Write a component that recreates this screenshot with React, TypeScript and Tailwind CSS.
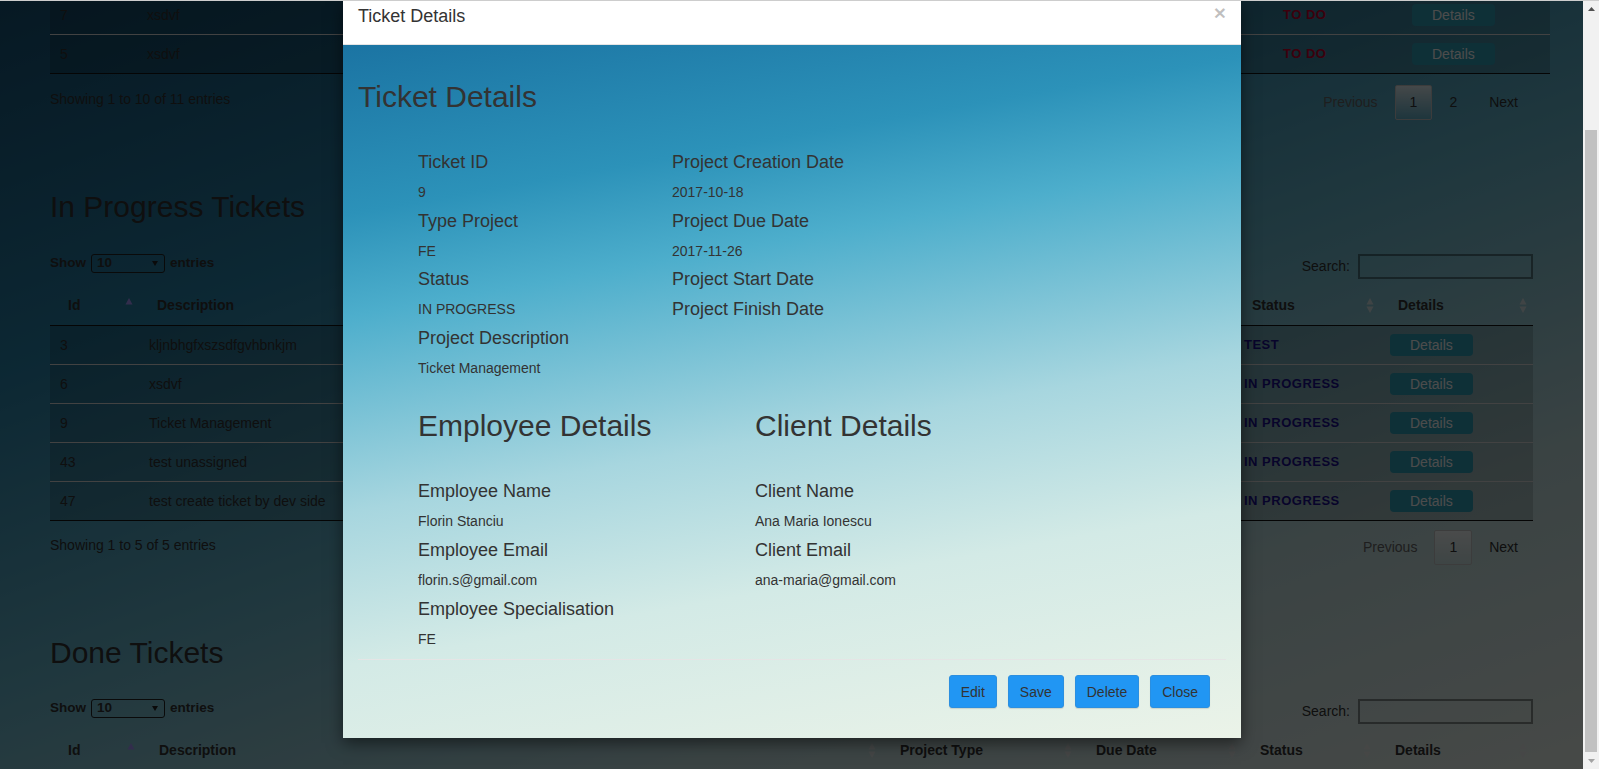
import React from 'react';

type Status = 'TO DO' | 'TEST' | 'IN PROGRESS';

interface Ticket {
  id: number;
  description: string;
  status: Status;
}

const topRows: Ticket[] = [
  { id: 7, description: 'xsdvf', status: 'TO DO' },
  { id: 5, description: 'xsdvf', status: 'TO DO' },
];

const progressRows: Ticket[] = [
  { id: 3, description: 'kljnbhgfxszsdfgvhbnkjm', status: 'TEST' },
  { id: 6, description: 'xsdvf', status: 'IN PROGRESS' },
  { id: 9, description: 'Ticket Management', status: 'IN PROGRESS' },
  { id: 43, description: 'test unassigned', status: 'IN PROGRESS' },
  { id: 47, description: 'test create ticket by dev side', status: 'IN PROGRESS' },
];

const headers = ['Id', 'Description', 'Project Type', 'Due Date', 'Status', 'Details'];

const SortIcon = ({ dir }: { dir: 'asc' | 'both' }) => (
  <svg width="8" height="15" viewBox="0 0 8 15" className="shrink-0">
    <path d="M4 0L7.5 6.5H0.5Z" fill={dir === 'asc' ? '#a898ff' : '#ececec'} fillOpacity={dir === 'asc' ? 1 : 0.75} />
    {dir === 'both' && <path d="M0.5 8.5H7.5L4 15Z" fill="#ececec" fillOpacity={0.75} />}
  </svg>
);

const HeaderRow = ({ grid }: { grid: string }) => (
  <div className={`grid ${grid} h-[41px] border-b border-[#111]`}>
    {headers.map((h, i) => (
      <div key={h} className="flex items-center justify-between pl-[18px] pr-[6px] text-[14px] font-bold text-[#333]">
        <span>{h}</span>
        <SortIcon dir={i === 0 ? 'asc' : 'both'} />
      </div>
    ))}
  </div>
);

// the middle columns sit under the modal, so they stay empty here
const TicketRow = ({ t, grid, first }: { t: Ticket; grid: string; first: boolean }) => (
  <div className={`grid ${grid} bg-black/15 ${first ? 'h-[38px]' : 'h-[39px] border-t border-[#dddddd]'}`}>
    <div className="flex items-center px-[10px] text-[14px] text-[#333]">{t.id}</div>
    <div className="flex items-center px-[10px] text-[14px] text-[#333] whitespace-nowrap">{t.description}</div>
    <div />
    <div />
    <div
      className={`flex items-center px-[10px] text-[13px] font-bold tracking-[0.5px] whitespace-nowrap ${
        t.status === 'TO DO' ? 'text-[#c8002c]' : 'text-[#1c1090]'
      }`}
    >
      {t.status}
    </div>
    <div className="flex items-center px-[10px]">
      <button className="h-[22px] px-[20px] rounded-[4px] bg-[#2fa0ba] text-[14px] leading-[20px] text-white">Details</button>
    </div>
  </div>
);

const Pager = ({ pages }: { pages: number }) => (
  <div className="flex items-center h-[35px] text-[14px]">
    <span className="px-[15px] text-[#666]">Previous</span>
    <span className="ml-[2px] h-[35px] px-[14px] flex items-center border border-[#c8c8c8] rounded-[2px] bg-[linear-gradient(to_bottom,rgba(255,255,255,0.85),rgba(255,255,255,0.05))] text-[#333]">
      1
    </span>
    {pages > 1 && <span className="ml-[2px] px-[15px] text-[#333]">2</span>}
    <span className="ml-[2px] px-[15px] text-[#333]">Next</span>
  </div>
);

const TableFooter = ({ info, pages, infoMt, pagerMt }: { info: string; pages: number; infoMt: string; pagerMt: string }) => (
  <div className="flex justify-between items-start">
    <div className={`${infoMt} text-[14px] leading-[20px] text-[#333]`}>{info}</div>
    <div className={pagerMt}>
      <Pager pages={pages} />
    </div>
  </div>
);

const Controls = () => (
  <div className="flex justify-between items-start h-[25px]">
    <div className="flex items-center h-[19px] text-[13.5px] font-bold text-[#333]">
      <span>Show</span>
      <div className="mx-[5px] w-[74px] h-[19px] border border-[#222] rounded-[3px] flex items-center justify-between pl-[5px] pr-[6px]">
        <span>10</span>
        <svg width="6" height="5" viewBox="0 0 6 5">
          <path d="M0 0H6L3 5Z" fill="#222" />
        </svg>
      </div>
      <span>entries</span>
    </div>
    <div className="flex items-center h-[25px] text-[14px] text-[#333]">
      <span>Search:</span>
      <div className="ml-[8px] w-[175px] h-[25px] border-2 border-black/40" />
    </div>
  </div>
);

const Field = ({ label, value, gap }: { label: string; value?: string; gap: string }) => (
  <div>
    <h4 className="text-[18px] leading-[20px] text-[#333] mb-[10px]">{label}</h4>
    {value !== undefined && <p className={`text-[14px] leading-[20px] text-[#333] ${gap}`}>{value}</p>}
  </div>
);

const ModalButton = ({ children }: { children: React.ReactNode }) => (
  <button className="h-[33px] px-[11px] rounded-[3px] bg-[#2196f3] border border-[#2b8fe0] shadow-[0_1px_1px_rgba(0,0,0,0.12)] text-[14px] leading-[20px] text-[#333]">
    {children}
  </button>
);

const TicketModal = () => (
  <div className="absolute left-[343px] top-[1px] w-[898px] shadow-[0_5px_15px_rgba(0,0,0,0.5)]">
    <div className="relative h-[44px] bg-white border-b border-[#e5e5e5] px-[15px] pt-[5px]">
      <h4 className="text-[18px] leading-[20px] text-[#333]">Ticket Details</h4>
      <span className="absolute right-[15px] top-[1px] text-[21px] leading-[21px] font-bold text-black/25">×</span>
    </div>
    <div className="bg-[linear-gradient(170deg,#1b74a3_0%,#2c92b9_20%,#4daecc_32%,#a7d6df_55%,#d3eae6_73%,#ebf3e8_100%)] px-[15px] pt-[35px] pb-[15px]">
      <h2 className="text-[30px] leading-[33px] text-[#333]">Ticket Details</h2>

      <div className="mt-[39px] ml-[60px] flex">
        <div className="w-[254px]">
          <Field label="Ticket ID" value="9" gap="mb-[8.5px]" />
          <Field label="Type Project" value="FE" gap="mb-[8.5px]" />
          <Field label="Status" value="IN PROGRESS" gap="mb-[8.5px]" />
          <Field label="Project Description" value="Ticket Management" gap="mb-[8.5px]" />
        </div>
        <div>
          <Field label="Project Creation Date" value="2017-10-18" gap="mb-[8.5px]" />
          <Field label="Project Due Date" value="2017-11-26" gap="mb-[8.5px]" />
          <Field label="Project Start Date" gap="" />
          <Field label="Project Finish Date" gap="" />
        </div>
      </div>

      <div className="mt-[23px] ml-[60px] flex pb-[1px]">
        <div className="w-[337px]">
          <h2 className="text-[30px] leading-[33px] text-[#333]">Employee Details</h2>
          <div className="mt-[39px]">
            <Field label="Employee Name" value="Florin Stanciu" gap="mb-[9px]" />
            <Field label="Employee Email" value="florin.s@gmail.com" gap="mb-[9px]" />
            <Field label="Employee Specialisation" value="FE" gap="mb-[9px]" />
          </div>
        </div>
        <div>
          <h2 className="text-[30px] leading-[33px] text-[#333]">Client Details</h2>
          <div className="mt-[39px]">
            <Field label="Client Name" value="Ana Maria Ionescu" gap="mb-[9px]" />
            <Field label="Client Email" value="ana-maria@gmail.com" gap="mb-[9px]" />
          </div>
        </div>
      </div>

      <div className="border-t border-[#e5e5e5] pl-[15px] pr-[16px] py-[15px] flex justify-end gap-[11px]">
        <ModalButton>Edit</ModalButton>
        <ModalButton>Save</ModalButton>
        <ModalButton>Delete</ModalButton>
        <ModalButton>Close</ModalButton>
      </div>
    </div>
  </div>
);

const Scrollbar = () => (
  <div className="w-[16px] h-full bg-[#f1f1f1] flex flex-col items-center">
    <div className="h-[17px] w-full flex items-center justify-center">
      <svg width="7" height="4" viewBox="0 0 7 4">
        <path d="M0 4L3.5 0L7 4Z" fill="#505050" />
      </svg>
    </div>
    <div className="mt-[113px] w-[12px] h-[622px] bg-[#c1c1c1]" />
    <div className="h-[17px] w-full flex items-center justify-center">
      <svg width="7" height="4" viewBox="0 0 7 4">
        <path d="M0 0L7 0L3.5 4Z" fill="#a3a3a3" />
      </svg>
    </div>
  </div>
);

export default function App() {
  const topGrid = 'grid-cols-[87px_763px_200px_173px_129px_148px]';
  const progressGrid = 'grid-cols-[89px_743px_197px_155px_146px_153px]';
  const doneGrid = 'grid-cols-[91px_741px_196px_164px_135px_156px]';

  return (
    <div className="font-['Liberation_Sans',Arial,sans-serif] relative w-[1599px] h-[769px] overflow-hidden flex bg-[#f1f1f1]">
      <div className="relative w-[1583px] h-full overflow-hidden bg-[linear-gradient(160deg,#175478_0%,#2b86ad_28%,#6bbad0_52%,#c4e1e2_76%,#edf5ef_100%)]">
        <div className="ml-[50px] w-[1483px] -mt-[4px]">
          <div className="w-[1500px] border-b border-[#111]">
            {topRows.map((t, i) => (
              <TicketRow key={t.id} t={t} grid={topGrid} first={i === 0} />
            ))}
          </div>
          <TableFooter info="Showing 1 to 10 of 11 entries" pages={2} infoMt="mt-[15px]" pagerMt="mt-[11px]" />

          <h2 className="mt-[70px] text-[30px] leading-[33px] text-[#333]">In Progress Tickets</h2>
          <div className="mt-[31px]">
            <Controls />
          </div>
          <div className="mt-[6px] border-b border-[#111]">
            <HeaderRow grid={progressGrid} />
            {progressRows.map((t, i) => (
              <TicketRow key={t.id} t={t} grid={progressGrid} first={i === 0} />
            ))}
          </div>
          <TableFooter info="Showing 1 to 5 of 5 entries" pages={1} infoMt="mt-[14px]" pagerMt="mt-[9px]" />

          <h2 className="mt-[71px] text-[30px] leading-[33px] text-[#333]">Done Tickets</h2>
          <div className="mt-[30px]">
            <Controls />
          </div>
          <div className="mt-[6px]">
            <HeaderRow grid={doneGrid} />
          </div>
        </div>

        <div className="absolute inset-0 bg-black/70" />
        <TicketModal />
      </div>
      <Scrollbar />
      <div className="absolute top-0 left-0 right-0 h-px bg-[#cdcdcd]" />
    </div>
  );
}
